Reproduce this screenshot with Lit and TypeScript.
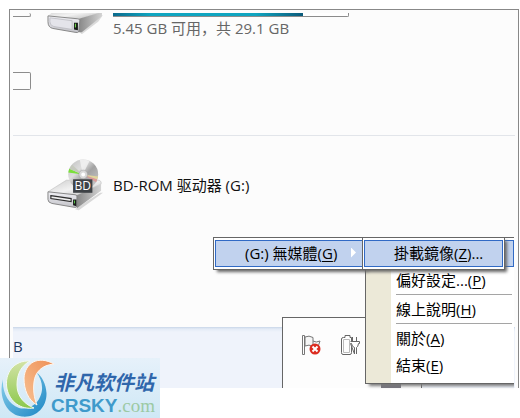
import { LitElement, html, css, svg } from "lit";
import { customElement } from "lit/decorators.js";

@customElement("drive-icon")
class DriveIcon extends LitElement {
  static styles = css`
    :host { display: block; }
    svg { display: block; width: 100%; }
  `;
  static properties = { disc: { type: Boolean } };
  declare disc: boolean;

  render() {
    const box = this.disc ? "0 0 58 53" : "0 32 58 22";
    return html`<svg viewBox=${box} aria-hidden="true">
      <defs>
        <linearGradient id="top" x1="0" y1="0" x2="1" y2="1">
          <stop offset="0" stop-color="#cccccc" /><stop offset=".5" stop-color="#f2f2f2" /><stop offset="1" stop-color="#b4b4b4" />
        </linearGradient>
        <linearGradient id="side" x1="0" y1="0" x2="1" y2="0">
          <stop offset="0" stop-color="#858585" /><stop offset="1" stop-color="#d4d4d4" />
        </linearGradient>
        <linearGradient id="front" x1="0" y1="0" x2="0" y2="1">
          <stop offset="0" stop-color="#f0f0f4" /><stop offset="1" stop-color="#c2c2c8" />
        </linearGradient>
        <linearGradient id="disc" x1="0" y1="0" x2="1" y2="1">
          <stop offset="0" stop-color="#bdbdbd" /><stop offset=".35" stop-color="#dedede" />
          <stop offset=".55" stop-color="#a2a2a2" /><stop offset="1" stop-color="#d2d2d2" />
        </linearGradient>
      </defs>
      ${this.disc ? this.opticalDrive() : this.hardDrive()}
    </svg>`;
  }

  private hardDrive() {
    return svg`
      <path d="M34 52 54 36 58 34 53 41 36 54Z" fill="#dadada" />
      <path d="M1 35 9 28H57V32L34 38Z" fill="url(#top)" />
      <path d="M33 38 57 31V35L36 52H32Z" fill="url(#side)" />
      <path d="M1 35 32 38Q34 38 34 40L33 51Q32 53 29 52L6 48Q1 47 1 41Z" fill="url(#front)" stroke="#858585" />
      <path d="M3 37 26 40V49L7 46Q3 45 3 41Z" fill="#e4e4ea" stroke="#b4b4ba" stroke-width=".7" />
      <path d="M28 42H32V50L28 49Z" fill="#151815" />
      <path d="M29.500 43V47" stroke="#6bd04a" stroke-width="1.200" />`;
  }

  private opticalDrive() {
    return svg`
      <path d="M29 52 55 35 58 35 33 53Z" fill="#d8d8d8" />
      <path d="M1 34 20 22H54Q57 23 56 26L30 38Z" fill="url(#top)" stroke="#bdbdbd" stroke-width=".6" />
      <path d="M30 38 56 26V33L31 51Z" fill="url(#side)" />
      <path d="M1 34 29 37Q31 37 31 39V48Q31 51 28 50L5 46Q1 45 1 42Z" fill="url(#front)" stroke="#868686" />
      <path d="M4 38 25 41V44L4 41Z" fill="#eee" stroke="#303030" stroke-width="1.200" />
      <path d="M27 42H30.500V49L27 48Z" fill="#181c18" />
      <path d="M28.500 43V46" stroke="#58c64a" />
      <circle cx="37.500" cy="16" r="15.500" fill="url(#disc)" />
      <path d="M37 16 23 10 22 14Z" fill="#7be03c" />
      <path d="M37 16 26 6 23 10Z" fill="#c5c9bd" />
      <path d="M37 16 52 21 51 24Z" fill="#dd9a98" />
      <path d="M37 16 53 18 52 21Z" fill="#e2d59b" />
      <path d="M37 16 34 1Q39 0 44 2Z" fill="#f4f4f4" opacity=".8" />
      <circle cx="37.500" cy="16" r="4.500" fill="#d8d8d8" stroke="#a5a5a5" stroke-width=".6" />
      <circle cx="37.500" cy="16" r="2" fill="#fff" />
      <rect x="27" y="21" width="20" height="14" fill="#3e4246" />
      <text x="37" y="32.500" text-anchor="middle" fill="#fff" font-family="Open Sans, sans-serif" font-size="12.500">BD</text>`;
  }
}

@customElement("site-mark")
class SiteMark extends LitElement {
  static styles = css`
    :host {
      display: flex;
      align-items: center;
      box-sizing: border-box;
      width: 160px;
      height: 60px;
      background: linear-gradient(#e6f1fa, #cfe8f6);
    }
    .swoosh { flex: none; width: 51px; height: 60px; overflow: visible; }
    .names { display: flex; flex-direction: column; white-space: nowrap; padding-top: 10px; }
    .cn { font: italic bold 20px/26px "Noto Sans CJK SC", sans-serif; color: #2f66ab; padding-left: 3px; }
    .en { font: bold 19px/22px "Liberation Sans", sans-serif; color: #3f9acb; }
    .tld { font: 19px/22px "Liberation Serif", serif; color: #9cc9a4; }
  `;
  render() {
    return html`
      <svg class="swoosh" viewBox="0 0 51 60" aria-hidden="true">
        <defs>
          <linearGradient id="b" x1="0" y1="0" x2="1" y2="1"><stop offset="0" stop-color="#8fd2ec" /><stop offset="1" stop-color="#1b86c4" /></linearGradient>
          <linearGradient id="g" x1="0" y1="0" x2="0" y2="1"><stop offset="0" stop-color="#d3e3a6" /><stop offset="1" stop-color="#8cc84c" /></linearGradient>
          <linearGradient id="o" x1="1" y1="0" x2="0" y2="1"><stop offset="0" stop-color="#ee8f55" /><stop offset="1" stop-color="#f8c294" /></linearGradient>
        </defs>
        <path d="M3 21C-2 38 6 57 22 58.500C36 60 47 49 46.500 35C46 26 42 18 36 14C42 21 44 31 40 39C36 48 27 52 19 50C8 46 2 34 3 21Z" fill="url(#b)" />
        <path d="M30 3C14 2 4 15 7 31C10 44 21 52 34 50C24 46 17 38 17 27C17 16 21 8 30 3Z" fill="url(#g)" stroke="#f4faf4" />
        <path d="M54 6C38-3 25 5 24 20C24 32 28 42 37 47C34 40 33 32 34 24C35 14 42 7 54 6Z" fill="url(#o)" stroke="#fdf6f0" />
      </svg>
      <div class="names">
        <span class="cn">非凡软件站</span>
        <span class="en">CRSKY<span class="tld">.com</span></span>
      </div>`;
  }
}

@customElement("app-root")
class AppRoot extends LitElement {
  static styles = css`
    :host {
      display: block;
      position: relative;
      box-sizing: border-box;
      padding: 9px 1px 30px 9px;
      background: #fff;
      color: #111;
      font: 15px/20px "Open Sans", "Noto Sans CJK SC", sans-serif;
    }
    .window {
      border: 1px solid #888;
      border-bottom: 0;
      padding: 3px 3px 0;
      background: #fcfcfc;
    }
    .volume { display: grid; grid-template-columns: 18px 1fr; column-gap: 16px; height: 122px; border-bottom: 1px solid #e2e5ea; }
    .rail { display: flex; flex-direction: column; gap: 55px; }
    .edge { height: 18px; box-sizing: border-box; border: 1px solid #8c8c8c; border-left: 0; border-radius: 0 2px 2px 0; }
    .edge.cut { height: 4px; border-top: 0; }
    .drive { display: flex; gap: 10px; }
    .drive drive-icon { flex: none; width: 56px; }
    .usage { flex: none; width: 236px; }
    .track { height: 4px; box-sizing: border-box; border: solid #8c8c8c; border-width: 0 1px 1px 0; border-radius: 0 0 2px 0; background: #fff; }
    .fill { height: 3px; background: linear-gradient(90deg, #0a6a8c, #0ea5c0 20%, #0ea5c0 75%, #0b5a7a); }
    .free { color: #666; padding-top: 1px; }
    .optical { align-items: center; height: 50px; padding: 24px 0 117px 34px; }
    .details {
      box-sizing: border-box;
      height: 61px;
      padding-top: 9px;
      background: linear-gradient(#c8d6e8, #e3ebf6 2px, #eff3fb 5px);
      color: #1f3a60;
    }
    button {
      display: block;
      box-sizing: border-box;
      width: 100%;
      height: 27px;
      margin: 0;
      padding: 0 0 2px 29px;
      border: 1px solid transparent;
      background: none;
      color: #000;
      font: 15px/20px "Open Sans", "Noto Sans CJK TC", sans-serif;
      text-align: left;
      white-space: nowrap;
    }
    button.on { border-color: #316ac5; background: #c1d2ee; }
    .panel { position: absolute; box-sizing: border-box; border: 1px solid #666; background: #fff; }
    .tray { left: 282px; top: 317px; width: 140px; height: 71px; border-bottom: 0; padding: 16px 18px; display: flex; gap: 14px; background: #fdfdfd; }
    .tray button { width: 24px; height: 24px; padding: 0; border: 0; }
    .tray svg { display: block; }
    .shade { position: absolute; right: 20px; bottom: 0; width: 20px; height: 5px; background: #77757f; }
    .menu { left: 365px; right: 6px; top: 237px; height: 147px; padding-top: 2px; border-right: 0; background: linear-gradient(90deg, #ece9d8 25px, #fff 25px); box-shadow: 3px 3px 3px -1px #777; clip-path: inset(0 0 -6px 0); }
    .menu hr { margin: 0 2px 0 30px; border: 0; border-top: 1px solid #a5a5a5; height: 1px; }
    .fly { top: 237px; height: 33px; padding: 2px 1px; box-shadow: 3px 3px 3px -1px #666; }
    .device { left: 213px; width: 153px; }
    .device button { display: flex; align-items: center; justify-content: space-between; padding-right: 7px; }
    .action { left: 362px; width: 143px; }
    .arrow { width: 5px; height: 10px; background: #fff; clip-path: polygon(0 0, 100% 50%, 0 100%); }
    .mark { position: absolute; left: 0; top: 358px; }
    u { text-underline-offset: 2px; text-decoration-thickness: 1px; }
  `;

  private entry(label: string, key: string) {
    return html`<button role="menuitem">${label}(<u>${key}</u>)</button>`;
  }

  render() {
    return html`
      <main class="window">
        <section class="volume">
          <div class="rail"><div class="edge cut"></div><div class="edge"></div></div>
          <div class="drive">
            <drive-icon></drive-icon>
            <div class="usage">
              <div class="track" role="progressbar" aria-label="Used space" aria-valuenow="81"><div class="fill" style="width:81%"></div></div>
              <div class="free">5.45 GB 可用，共 29.1 GB</div>
            </div>
          </div>
        </section>
        <section class="drive optical">
          <drive-icon disc></drive-icon>
          <span>BD-ROM 驱动器 (G:)</span>
        </section>
        <footer class="details">B</footer>
      </main>

      <div class="panel tray">
        <button aria-label="Action center">
          <svg width="24" height="24" viewBox="0 0 24 24">
            <path d="M1.500 1.500V20.500H3.500V1.500Z" stroke="#777" fill="#fff" />
            <path d="M4 3Q8 1 12 3.500V12.500Q8 10 4 12ZM12 7Q15 9 19 7L17 13H12" fill="#f6f6f6" stroke="#777" />
            <circle cx="14" cy="15" r="5.500" fill="#dc2c20" />
            <path d="M11.500 12.500 16.500 17.500M16.500 12.500 11.500 17.500" stroke="#fff" stroke-width="2" />
          </svg>
        </button>
        <button aria-label="Power">
          <svg width="24" height="24" viewBox="0 0 24 24">
            <path d="M4.500 3.500H6V1.500H11V3.500H12.500V18.500Q12.500 20.500 11 20.500H4Q2.500 20.500 2.500 18.500V5Q2.500 3.500 4.500 3.500Z" fill="#fff" stroke="#666" />
            <path d="M4.500 5.500V18.500H10.500V5.500Z" fill="#fdfdfd" stroke="#bbb" />
            <path d="M13.500 3V7M17.500 3V7M11.500 7.500H20.500V9.500H19.500Q19 13 17.500 13.500V20M15.500 20V13.500Q13 13 12.500 9.500H11.500Z" fill="#fff" stroke="#666" />
          </svg>
        </button>
        <span class="shade"></span>
      </div>

      <nav class="panel menu" role="menu">
        <button class="on" role="menuitem" aria-label="Virtual drive"></button>
        ${this.entry("偏好設定...", "P")}
        <hr />
        ${this.entry("線上說明", "H")}
        <hr />
        ${this.entry("關於", "A")}
        ${this.entry("結束", "E")}
      </nav>
      <div class="panel fly device" role="menu">
        <button class="on" role="menuitem"><span>(G:) 無媒體(<u>G</u>)</span><span class="arrow"></span></button>
      </div>
      <div class="panel fly action" role="menu">
        <button class="on" role="menuitem">掛載鏡像(<u>Z</u>)...</button>
      </div>
      <site-mark class="mark"></site-mark>
    `;
  }
}
